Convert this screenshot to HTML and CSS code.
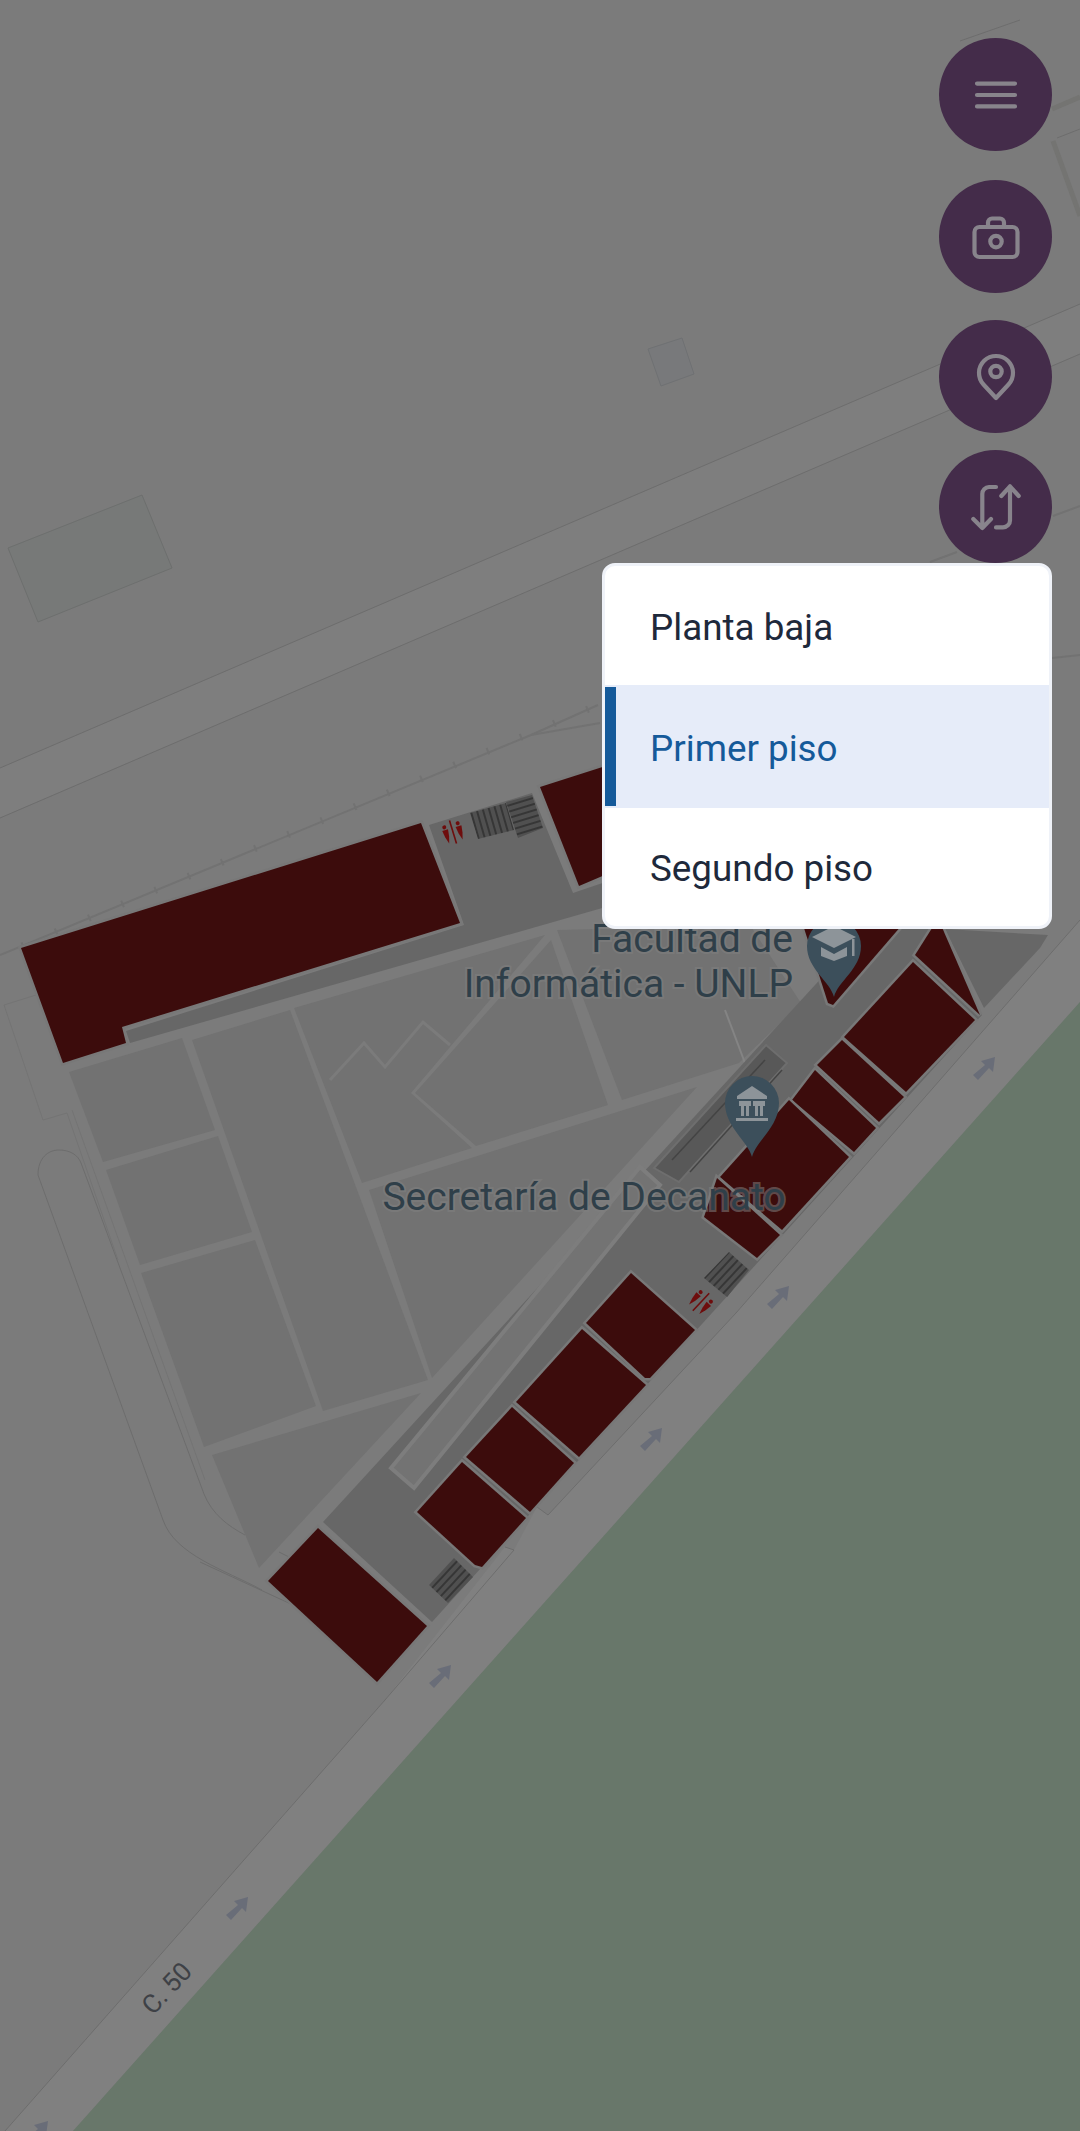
FILE: index.html
```html
<!DOCTYPE html>
<html>
<head>
  <meta charset="UTF-8">
  <title>Mapa</title>
  <link rel="stylesheet" href="styles.css">
</head>
<body>
  <svg class="map" viewBox="0 0 1080 2131" width="1080" height="2131">
    <defs>
      <pattern id="stepsA" width="6" height="6" patternUnits="userSpaceOnUse" patternTransform="rotate(-16)">
        <rect class="step-base" width="6" height="6"/>
        <rect class="step-line" width="2" height="6"/>
      </pattern>
      <pattern id="stepsB" width="6" height="6" patternUnits="userSpaceOnUse" patternTransform="rotate(-17)">
        <rect class="step-base" width="6" height="6"/>
        <rect class="step-line" width="6" height="2"/>
      </pattern>
      <pattern id="stepsC" width="6" height="6" patternUnits="userSpaceOnUse" patternTransform="rotate(-47)">
        <rect class="step-base" width="6" height="6"/>
        <rect class="step-line" width="6" height="2"/>
      </pattern>
      <g id="restroom">
        <circle cx="-7" cy="-7" r="2"/>
        <path d="M-10 -4h6l-1 7-2 7-2-7z"/>
        <circle cx="7" cy="-7" r="2"/>
        <path d="M4 -4h6l-1 7-2 7-2-7z"/>
        <rect x="-0.8" y="-12" width="1.600" height="24"/>
      </g>
      <path id="arrow" d="M-11 8L1 -2-3 -6 11 -10 9 5 5 1-6 13z"/>
    </defs>

    <!-- streets -->
    <polygon class="road road-top" points="0,768 1080,304 1080,354 0,818"/>
    <polygon class="road" points="5,2131 385,1700 505,1547 514,1550 537,1507 548,1515 736,1313 1080,920 1080,1002 73,2131"/>
    <polygon class="green" points="73,2131 1080,1002 1080,2131"/>
    <polyline class="thin" points="0,768 1080,304"/>
    <polyline class="thin" points="0,818 1080,354"/>
    <polyline class="thin" points="5,2131 385,1700 514,1550 505,1547"/>
    <polyline class="thin" points="537,1507 548,1515 736,1313 1080,920"/>

    <!-- free standing blocks -->
    <polygon class="block-green" points="8,548 142,495 172,568 38,622"/>
    <polygon class="block-blue" points="648,349 682,338 694,374 661,386"/>
    <polyline class="thin" points="960,41 1020,20"/>
    <polyline class="wall" points="1052,109 1080,97"/>
    <polyline class="wall" points="1053,141 1080,216"/>
    <polyline class="thin" points="1057,138 1080,129"/>

    <!-- fence -->
    <polyline class="fence" points="0,955 531,735 598,705"/>
    <polyline class="fence" points="531,735 600,723"/>
    <polyline class="fence" points="1052,658 1080,655"/>
    <polyline class="fence" points="930,562 957,552"/>
    <polyline class="fence" points="1053,516 1080,506"/>
    <polyline class="ticks" points="22,946 598,705"/>

    <!-- side path -->
    <path class="thin" d="M38 1175C38 1158 48 1150 59 1150 70 1150 78 1155 81 1163L204 1494C212 1514 228 1526 245 1535"/>
    <path class="thin" d="M38 1175L163 1520C175 1555 225 1570 262 1590"/>
    <polyline class="faint" points="4,1005 43,1120 67,1113 118,1260"/>
    <polyline class="faint" points="4,1005 36,995"/>
    <polyline class="faint" points="72,1110 205,1480"/>
    <polyline class="thin" points="200,1562 293,1605"/>
    <polyline class="thin" points="279,1552 295,1560"/>

    <!-- rooms -->
    <polygon class="room" points="69,1072 182,1038 215,1130 103,1162"/>
    <polygon class="room" points="106,1170 218,1136 252,1232 140,1265"/>
    <polygon class="room" points="141,1273 255,1240 316,1406 204,1447"/>
    <polygon class="room" points="192,1040 290,1010 428,1380 323,1411"/>
    <polygon class="room" points="294,1008 545,935 411,1093 472,1148 362,1183"/>
    <polygon class="room" points="551,940 415,1093 476,1146 608,1105"/>
    <polygon class="room" points="557,930 622,1100 739,1063 801,1003 750,925"/>
    <polygon class="room" points="369,1190 697,1087 432,1378"/>
    <polygon class="room" points="212,1455 421,1393 259,1568"/>
    <polyline class="inner" points="330,1080 364,1043 385,1067 423,1022 450,1045"/>
    <polyline class="door" points="725,1010 745,1063"/>

    <!-- corridors -->
    <polygon class="walk" points="429,825 532,793 573,893 700,850 700,880 130,1043 126,1031 464,925"/>
    <polygon class="walk" points="323,1522 870,925 930,925 982,1015 432,1622"/>
    <polygon class="walk" points="945,929 1048,935 1040,948 984,1008"/>
    <polygon class="island" points="391,1468 640,1167 660,1185 414,1488"/>
    <polygon class="ramp" points="766,1045 787,1063 679,1182 654,1168"/>
    <polyline class="ramp-line" points="765,1060 672,1160"/>
    <polyline class="ramp-line" points="782,1070 690,1172"/>

    <!-- faculty buildings -->
    <polygon class="building" points="21,948 421,823 460,923 122,1027 126,1043 63,1063"/>
    <polygon class="building" points="540,787 640,755 640,860 579,886"/>
    <polygon class="building" points="803,925 902,925 833,1005 828,1003"/>
    <polygon class="building" points="934,925 941,925 980,1015 915,955"/>
    <polygon class="building" points="913,962 975,1020 906,1092 844,1037"/>
    <polygon class="building" points="842,1040 904,1097 879,1122 817,1065"/>
    <polygon class="building" points="815,1070 876,1128 854,1152 792,1100"/>
    <polygon class="building" points="789,1100 849,1157 782,1230 720,1177"/>
    <polygon class="building" points="717,1178 780,1235 757,1258 704,1217"/>
    <polygon class="building" points="631,1273 695,1330 650,1378 645,1378 586,1323"/>
    <polygon class="building" points="582,1329 646,1385 579,1457 516,1402"/>
    <polygon class="building" points="512,1407 574,1463 530,1512 466,1457"/>
    <polygon class="building" points="462,1462 526,1518 482,1567 475,1565 417,1512"/>
    <polygon class="building" points="318,1528 427,1626 377,1682 268,1581"/>

    <!-- stairs and restrooms -->
    <polygon fill="url(#stepsA)" points="470,813 506,803 514,830 478,839"/>
    <polygon fill="url(#stepsB)" points="506,802 532,795 543,828 518,838"/>
    <polygon fill="url(#stepsC)" points="429,1585 454,1558 473,1577 448,1603"/>
    <polygon fill="url(#stepsC)" points="704,1278 729,1252 749,1270 727,1297"/>
    <use class="restroom" href="#restroom" transform="translate(453 832) rotate(-17)"/>
    <use class="restroom" href="#restroom" transform="translate(701 1302) rotate(43)"/>

    <!-- one way arrows -->
    <use class="arrow" href="#arrow" transform="translate(984 1067)"/>
    <use class="arrow" href="#arrow" transform="translate(778 1296)"/>
    <use class="arrow" href="#arrow" transform="translate(651 1438)"/>
    <use class="arrow" href="#arrow" transform="translate(440 1675)"/>
    <use class="arrow" href="#arrow" transform="translate(237 1907)"/>
    <use class="arrow" href="#arrow" transform="translate(37 2131)"/>

    <!-- labels -->
    <text class="label" x="793" y="952" text-anchor="end">Facultad de</text>
    <text class="label" x="793" y="997" text-anchor="end">Informática - UNLP</text>
    <text class="label" x="584" y="1210" text-anchor="middle">Secretaría de Decanato</text>
    <text class="street" transform="translate(153 2016) rotate(-47)">C. 50</text>

    <!-- pins -->
    <g transform="translate(834 945)">
      <path class="pin" d="M0 52C-4 36-27 24-27 1A27 27 0 0 1 27 1C27 24 4 36 0 52Z"/>
      <path class="pin-icon" d="M-22 -8L0 -19 22 -8 0 3zM-13 2L0 9 13 2V11L0 16-13 11zM18 -6H20.500V11H18z"/>
    </g>
    <g transform="translate(752 1103)">
      <path class="pin" d="M0 54C-4 38-27 24-27 0A27 27 0 0 1 27 0C27 24 4 38 0 54Z"/>
      <path class="pin-icon" d="M0 -17L15 -7V-4H-15V-7zM-13 -2H-1V3H-3V13H-6V3H-8V13H-11V3H-13zM1 -2H13V3H11V13H8V3H6V13H3V3H1zM-16 15H16V18H-16z"/>
    </g>
  </svg>

  <aside class="controls">
    <button class="fab" type="button">
      <svg class="fab-icon" viewBox="0 0 60 60" width="60" height="60">
        <path d="M11 18.600H49M11 30H49M11 41.400H49"/>
      </svg>
    </button>
    <button class="fab fab-camera" type="button">
      <svg class="fab-icon" viewBox="0 0 60 60" width="60" height="60">
        <rect x="8.500" y="20" width="43" height="30" rx="5"/>
        <path d="M22 20V15.500A4 4 0 0 1 26 11.500H34A4 4 0 0 1 38 15.500V20"/>
        <circle cx="30" cy="34.600" r="5.700"/>
      </svg>
    </button>
    <button class="fab fab-place" type="button">
      <svg class="fab-icon" viewBox="0 0 60 60" width="60" height="60">
        <path d="M30 51L17.500 37.500A17 17 0 1 1 42.500 37.500Z"/>
        <circle cx="30" cy="24.500" r="5.700"/>
      </svg>
    </button>
    <button class="fab fab-floors" type="button">
      <svg class="fab-icon" viewBox="0 0 60 60" width="60" height="60">
        <path d="M30 10H23A7 7 0 0 0 16.300 17V51M7.300 42L16.300 51 25 42"/>
        <path d="M30 50.400H37A7 7 0 0 0 44 43.400V9.300M35.300 19L44 9.300 52.700 19"/>
      </svg>
    </button>

    <ul class="floors">
      <li class="floor">Planta baja</li>
      <li class="floor floor-active">Primer piso</li>
      <li class="floor floor-last">Segundo piso</li>
    </ul>
  </aside>
</body>
</html>
```

FILE: styles.css
```css
body {
  margin: 0;
  width: 1080px;
  height: 2131px;
  overflow: hidden;
  position: relative;
  background-color: #7b7b7b;
  font-family: 'Roboto', sans-serif;
}

/* Map canvas */
.map {
  display: block;
}
.road {
  fill: #808080;
}
.road-top {
  fill: #7e7e7e;
}
.green {
  fill: #68776a;
}
.thin {
  fill: none;
  stroke: #6d6d6d;
  stroke-width: 1;
}
.faint {
  fill: none;
  stroke: #747474;
  stroke-width: 1;
}
.wall {
  fill: none;
  stroke: #747472;
  stroke-width: 5;
}
.block-green {
  fill: #777978;
  stroke: #6d6f6e;
  stroke-width: 1;
}
.block-blue {
  fill: #78797b;
  stroke: #6f7173;
  stroke-width: 1;
}
.fence {
  fill: none;
  stroke: #727272;
  stroke-width: 2;
}
.ticks {
  fill: none;
  stroke: #727272;
  stroke-width: 7;
  stroke-dasharray: 2 34;
}
.room {
  fill: #727272;
}
.inner {
  fill: none;
  stroke: #7b7b7b;
  stroke-width: 3;
}
.door {
  fill: none;
  stroke: #848484;
  stroke-width: 2;
}
.walk {
  fill: #676767;
}
.island {
  fill: #737373;
  stroke: #7d7d7d;
  stroke-width: 4;
}
.ramp {
  fill: #585858;
  stroke: #6e6e6e;
  stroke-width: 2;
}
.ramp-line {
  fill: none;
  stroke: #444;
  stroke-width: 1.5;
}
.building {
  fill: #3c0c0c;
  stroke: #787878;
  stroke-width: 5;
  paint-order: stroke;
}
.step-base {
  fill: #505050;
}
.step-line {
  fill: #363636;
}
.restroom {
  fill: #6e0d0d;
}
.arrow {
  fill: #696d78;
}
.label {
  font-family: 'Roboto', sans-serif;
  font-size: 39px;
  fill: #2f3f49;
  stroke: rgba(128, 128, 128, 0.55);
  stroke-width: 4px;
  paint-order: stroke;
}
.street {
  font-family: 'Roboto', sans-serif;
  font-size: 26px;
  fill: #3e4146;
}
.pin {
  fill: #3c4f5b;
}
.pin-icon {
  fill: #8d9499;
}

/* Buttons and floor menu on the right */
.controls {
  position: absolute;
  top: 38px;
  right: 28px;
  display: flex;
  flex-direction: column;
  align-items: flex-end;
}
.fab {
  width: 113px;
  height: 113px;
  padding: 0;
  border: none;
  border-radius: 50%;
  background-color: #442c4a;
  display: flex;
  align-items: center;
  justify-content: center;
}
.fab-camera {
  margin-top: 29px;
}
.fab-place {
  margin-top: 27px;
}
.fab-floors {
  margin-top: 17px;
}
.fab-icon {
  fill: none;
  stroke: #88848c;
  stroke-width: 4.2;
  stroke-linecap: round;
  stroke-linejoin: round;
}

.floors {
  list-style: none;
  width: 450px;
  box-sizing: border-box;
  margin: 0;
  padding: 0;
  background-color: #fff;
  border: 3px solid #eff2f8;
  border-radius: 13px;
  overflow: hidden;
}
.floor {
  box-sizing: border-box;
  height: 119px;
  padding: 3px 0 0 45px;
  display: flex;
  align-items: center;
  font-size: 36.8px;
  color: #1e293b;
}
.floor-active {
  height: 123px;
  padding-left: 0;
  background-color: #e6ecf9;
  color: #155a9a;
}
/* the blue bar sits 2px inside the highlighted row */
.floor-active::before {
  content: "";
  align-self: stretch;
  width: 11px;
  margin: -1px 34px 2px 0;
  background-color: #155a9a;
}
.floor-last {
  height: 118px;
}
```
